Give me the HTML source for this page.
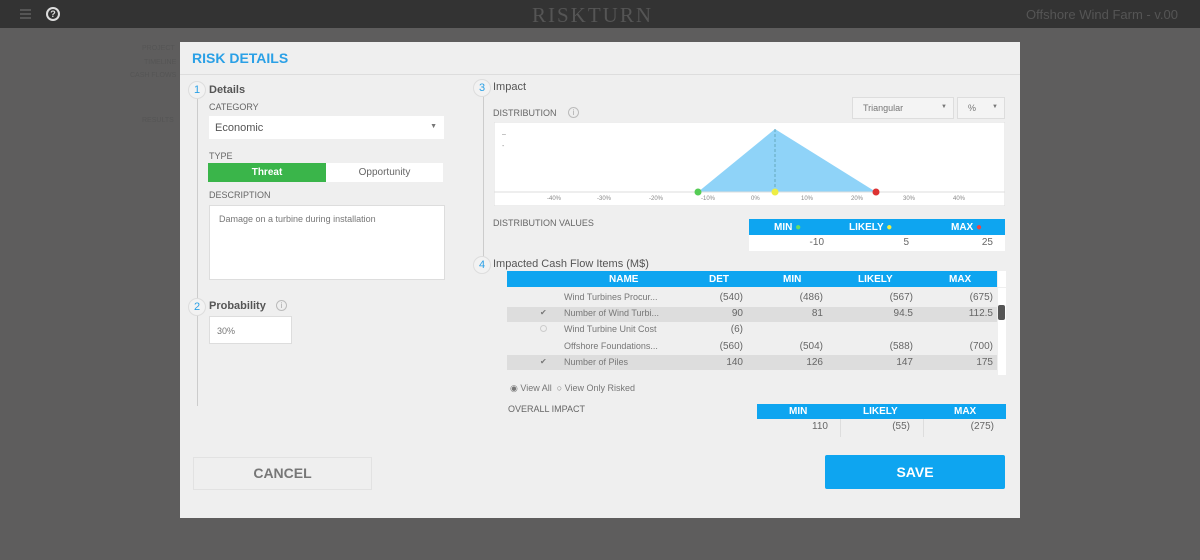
<!DOCTYPE html>
<html><head><meta charset="utf-8"><style>
*{margin:0;padding:0;box-sizing:border-box}
body{width:1200px;height:560px;background:#5e5d5d;font-family:"Liberation Sans",sans-serif;position:relative;overflow:hidden;color:#555}
.a{position:absolute}
.t{font-size:10px;color:#666}
.bl{background:#0ea5f0;color:#fff;font-weight:bold;font-size:10px}
.num{font-size:10px;color:#666;text-align:right}
.circ{width:18px;height:18px;border-radius:50%;border:1px solid #ddd;background:#f2f2f2;color:#2aa0e6;font-size:11px;text-align:center;line-height:16px}
.inf{width:11px;height:11px;border:1px solid #bbb;border-radius:50%;font-size:8px;color:#aaa;text-align:center;line-height:9px}
</style></head><body>
<div class="a" style="left:0;top:0;width:1200px;height:28px;background:#333"></div>
<div class="a" style="left:20px;top:9px;width:11px;height:2px;background:#555;box-shadow:0 4px 0 #555,0 8px 0 #555"></div>
<div class="a" style="left:46px;top:7px;width:14px;height:14px;border:2px solid #ddd;border-radius:50%;color:#ddd;font-size:9px;font-weight:bold;text-align:center;line-height:10px">?</div>
<div class="a" style="left:532px;top:3px;font-family:'Liberation Serif',serif;font-size:21px;letter-spacing:2px;color:#555">RISKTURN</div>
<div class="a" style="left:1026px;top:7px;font-size:13px;color:#555">Offshore Wind Farm - v.00</div>
<div class="a t" style="left:142px;top:45px;color:#555;font-size:7px">PROJECT</div>
<div class="a t" style="left:144px;top:59px;color:#555;font-size:7px">TIMELINE</div>
<div class="a t" style="left:130px;top:72px;color:#555;font-size:7px">CASH FLOWS</div>
<div class="a t" style="left:142px;top:117px;color:#555;font-size:7px">RESULTS</div>

<div class="a" style="left:180px;top:42px;width:840px;height:476px;background:#efefef"></div>
<div class="a" style="left:192px;top:50px;font-size:14px;font-weight:bold;color:#2aa0e6">RISK DETAILS</div>
<div class="a" style="left:180px;top:74px;width:840px;height:1px;background:#ddd"></div>

<div class="a" style="left:197px;top:90px;width:1px;height:316px;background:#ccc"></div>
<div class="a circ" style="left:188px;top:81px">1</div>
<div class="a" style="left:209px;top:84px;font-size:11px;font-weight:bold;color:#555">Details</div>
<div class="a t" style="left:209px;top:102px;font-size:9px">CATEGORY</div>
<div class="a" style="left:209px;top:116px;width:235px;height:23px;background:#fff;font-size:11px;color:#555;padding:6px 6px">Economic<span style="position:absolute;right:7px;top:7px;font-size:7px;color:#777">▼</span></div>
<div class="a t" style="left:209px;top:151px;font-size:9px">TYPE</div>
<div class="a" style="left:208px;top:163px;width:118px;height:19px;background:#3ab54a;color:#fff;font-size:10px;font-weight:bold;text-align:center;line-height:19px">Threat</div>
<div class="a" style="left:326px;top:163px;width:117px;height:19px;background:#fff;color:#666;font-size:10px;text-align:center;line-height:19px">Opportunity</div>
<div class="a t" style="left:209px;top:190px;font-size:9px">DESCRIPTION</div>
<div class="a" style="left:209px;top:205px;width:236px;height:75px;background:#fff;border:1px solid #ddd;font-size:9px;color:#777;padding:8px 9px">Damage on a turbine during installation</div>
<div class="a circ" style="left:188px;top:298px">2</div>
<div class="a" style="left:209px;top:300px;font-size:11px;font-weight:bold;color:#555">Probability</div>
<div class="a inf" style="left:276px;top:300px">i</div>
<div class="a" style="left:209px;top:316px;width:83px;height:28px;background:#fff;border:1px solid #ddd;font-size:9px;color:#777;padding:9px 7px">30%</div>

<div class="a" style="left:483px;top:95px;width:1px;height:170px;background:#ccc"></div>
<div class="a circ" style="left:473px;top:79px">3</div>
<div class="a" style="left:493px;top:81px;font-size:11px;color:#555">Impact</div>
<div class="a t" style="left:493px;top:108px;font-size:9px">DISTRIBUTION</div>
<div class="a inf" style="left:568px;top:107px">i</div>
<div class="a" style="left:852px;top:97px;width:102px;height:22px;background:#f4f4f4;border:1px solid #ddd;font-size:9px;color:#777;padding:5px 10px">Triangular<span style="position:absolute;right:6px;top:6px;font-size:6px">▼</span></div>
<div class="a" style="left:957px;top:97px;width:48px;height:22px;background:#f4f4f4;border:1px solid #ddd;font-size:9px;color:#777;padding:5px 10px">%<span style="position:absolute;right:6px;top:6px;font-size:6px">▼</span></div>
<svg class="a" style="left:494px;top:122px" width="511" height="84">
<rect x="0" y="0" width="511" height="84" fill="#fff" stroke="#ddd"/>
<polygon points="204,70 281,7 382,70" fill="#8fd3f8"/>
<line x1="281" y1="7" x2="281" y2="70" stroke="#6ab" stroke-dasharray="3,2"/>
<line x1="0" y1="70" x2="511" y2="70" stroke="#ddd"/>
<g font-size="6" fill="#888" font-family="Liberation Sans">
<text x="53" y="78">-40%</text><text x="103" y="78">-30%</text><text x="155" y="78">-20%</text><text x="207" y="78">-10%</text><text x="257" y="78">0%</text><text x="307" y="78">10%</text><text x="357" y="78">20%</text><text x="409" y="78">30%</text><text x="459" y="78">40%</text></g>
<text x="8" y="14" font-size="7" fill="#888">–</text><text x="8" y="26" font-size="7" fill="#888">-</text>
<circle cx="204" cy="70" r="3.5" fill="#5c5"/><circle cx="281" cy="70" r="3.5" fill="#ee4"/><circle cx="382" cy="70" r="3.5" fill="#d33"/>
</svg>
<div class="a t" style="left:493px;top:218px;font-size:9px">DISTRIBUTION VALUES</div>
<div class="a bl" style="left:749px;top:219px;width:256px;height:16px"></div>
<div class="a bl" style="left:774px;top:222px">MIN <span style="color:#6d6">●</span></div>
<div class="a bl" style="left:849px;top:222px">LIKELY <span style="color:#ee4">●</span></div>
<div class="a bl" style="left:951px;top:222px">MAX <span style="color:#e44">●</span></div>
<div class="a" style="left:749px;top:235px;width:256px;height:16px;background:#fff"></div>
<div class="a num" style="left:749px;top:237px;width:75px">-10</div>
<div class="a num" style="left:834px;top:237px;width:75px">5</div>
<div class="a num" style="left:918px;top:237px;width:75px">25</div>

<div class="a circ" style="left:473px;top:256px">4</div>
<div class="a" style="left:493px;top:258px;font-size:11px;color:#555">Impacted Cash Flow Items (M$)</div>
<div class="a bl" style="left:507px;top:271px;width:490px;height:16px"></div>
<div class="a bl" style="left:609px;top:274px">NAME</div>
<div class="a bl" style="left:709px;top:274px">DET</div>
<div class="a bl" style="left:783px;top:274px">MIN</div>
<div class="a bl" style="left:858px;top:274px">LIKELY</div>
<div class="a bl" style="left:949px;top:274px">MAX</div>
<div class="a" style="left:998px;top:271px;width:8px;height:16px;background:#fff"></div>
<div class="a" style="left:998px;top:288px;width:8px;height:87px;background:#fff"></div>
<div class="a" style="left:998px;top:305px;width:7px;height:15px;background:#555;border-radius:2px"></div>
<div class="a" style="left:507px;top:307px;width:490px;height:15px;background:#ddd"></div>
<div class="a" style="left:507px;top:355px;width:490px;height:15px;background:#ddd"></div>
<div class="a" style="left:507px;top:288px;width:490px;height:88px;font-size:9px;color:#777">
<div class="a" style="left:57px;top:4px">Wind Turbines Procur...</div>
<div class="a" style="left:57px;top:20px">Number of Wind Turbi...</div>
<div class="a" style="left:57px;top:36px">Wind Turbine Unit Cost</div>
<div class="a" style="left:57px;top:53px">Offshore Foundations...</div>
<div class="a" style="left:57px;top:69px">Number of Piles</div>
<div class="a" style="left:33px;top:20px;font-size:8px">✔</div>
<div class="a" style="left:33px;top:69px;font-size:8px">✔</div>
<div class="a" style="left:33px;top:37px;width:7px;height:7px;border:1px solid #ccc;border-radius:50%"></div>
<div class="a num" style="left:170px;top:4px;width:66px">(540)</div><div class="a num" style="left:250px;top:4px;width:66px">(486)</div><div class="a num" style="left:340px;top:4px;width:66px">(567)</div><div class="a num" style="left:420px;top:4px;width:66px">(675)</div>
<div class="a num" style="left:170px;top:20px;width:66px">90</div><div class="a num" style="left:250px;top:20px;width:66px">81</div><div class="a num" style="left:340px;top:20px;width:66px">94.5</div><div class="a num" style="left:420px;top:20px;width:66px">112.5</div>
<div class="a num" style="left:170px;top:36px;width:66px">(6)</div>
<div class="a num" style="left:170px;top:53px;width:66px">(560)</div><div class="a num" style="left:250px;top:53px;width:66px">(504)</div><div class="a num" style="left:340px;top:53px;width:66px">(588)</div><div class="a num" style="left:420px;top:53px;width:66px">(700)</div>
<div class="a num" style="left:170px;top:69px;width:66px">140</div><div class="a num" style="left:250px;top:69px;width:66px">126</div><div class="a num" style="left:340px;top:69px;width:66px">147</div><div class="a num" style="left:420px;top:69px;width:66px">175</div>
</div>
<div class="a t" style="left:510px;top:383px;font-size:9px;color:#777">◉ View All &nbsp;○ View Only Risked</div>
<div class="a t" style="left:508px;top:404px;font-size:9px">OVERALL IMPACT</div>
<div class="a bl" style="left:757px;top:404px;width:249px;height:15px"></div>
<div class="a bl" style="left:789px;top:406px">MIN</div>
<div class="a bl" style="left:863px;top:406px">LIKELY</div>
<div class="a bl" style="left:954px;top:406px">MAX</div>
<div class="a num" style="left:757px;top:421px;width:71px">110</div>
<div class="a num" style="left:840px;top:421px;width:70px">(55)</div>
<div class="a num" style="left:924px;top:421px;width:70px">(275)</div>
<div class="a" style="left:840px;top:419px;width:1px;height:18px;background:#ddd"></div>
<div class="a" style="left:923px;top:419px;width:1px;height:18px;background:#ddd"></div>

<div class="a" style="left:193px;top:457px;width:179px;height:33px;border:1px solid #e2e2e2;font-size:14px;font-weight:bold;color:#777;text-align:center;line-height:31px">CANCEL</div>
<div class="a" style="left:825px;top:455px;width:180px;height:34px;background:#0ea5f0;border-radius:2px;font-size:14px;font-weight:bold;color:#fff;text-align:center;line-height:34px">SAVE</div>
</body></html>
